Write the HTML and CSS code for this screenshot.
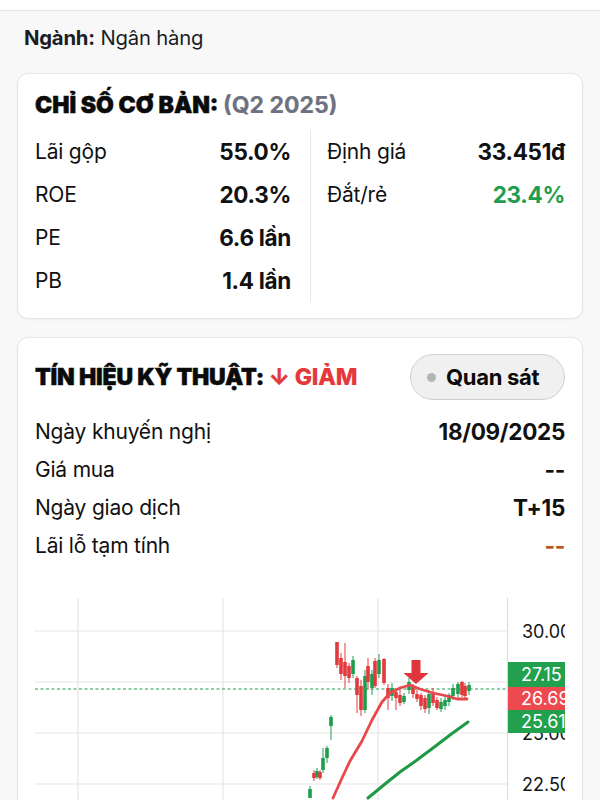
FILE: index.html
```html
<!DOCTYPE html>
<html lang="vi">
<head>
<meta charset="utf-8">
<link rel="stylesheet" href="styles.css">
</head>
<body>
<div class="topbar"></div>
<div class="sector"><b>Ngành:</b> Ngân hàng</div>

<section class="card card-basic">
  <h2 class="title">CHỈ SỐ CƠ BẢN: <span class="muted">(Q2 2025)</span></h2>
  <div class="metrics">
    <div class="col">
      <div class="row"><span>Lãi gộp</span><b>55.0%</b></div>
      <div class="row"><span>ROE</span><b>20.3%</b></div>
      <div class="row"><span>PE</span><b>6.6 lần</b></div>
      <div class="row"><span>PB</span><b>1.4 lần</b></div>
    </div>
    <div class="divider"></div>
    <div class="col">
      <div class="row"><span>Định giá</span><b>33.451đ</b></div>
      <div class="row"><span>Đắt/rẻ</span><b class="green">23.4%</b></div>
    </div>
  </div>
</section>

<section class="card card-tech">
  <div class="tech-head">
    <h2 class="title">TÍN HIỆU KỸ THUẬT: <span class="red">↓ GIẢM</span></h2>
    <button class="pill"><span class="dot"></span>Quan sát</button>
  </div>
  <div class="tech-rows">
    <div class="trow"><span>Ngày khuyến nghị</span><b>18/09/2025</b></div>
    <div class="trow"><span>Giá mua</span><b>--</b></div>
    <div class="trow"><span>Ngày giao dịch</span><b>T+15</b></div>
    <div class="trow"><span>Lãi lỗ tạm tính</span><b class="orange">--</b></div>
  </div>
  <svg class="chart" width="530" height="220" viewBox="0 0 530 220">
    <g transform="translate(-35,-600)">
      <g class="grid">
        <line x1="78" y1="600" x2="78" y2="820"/>
        <line x1="223" y1="600" x2="223" y2="820"/>
        <line x1="378" y1="600" x2="378" y2="820"/>
        <line x1="35" y1="633" x2="507" y2="633"/>
        <line x1="35" y1="684" x2="507" y2="684"/>
        <line x1="35" y1="735" x2="507" y2="735"/>
        <line x1="35" y1="786" x2="507" y2="786"/>
      </g>
      <line class="axis" x1="507.5" y1="600" x2="507.5" y2="820"/>
      <line class="dotted" x1="35" y1="691" x2="507" y2="691"/>

      <polyline class="ma-green" points="368,800 385,786 400,774 417,762 433,750 450,737 468,724"/>

      <g class="candles">
        <line class="gw" x1="310" y1="788" x2="310" y2="800"/><rect class="g" x="308.2" y="791" width="3.6" height="9"/>
        <line class="rw" x1="314" y1="772" x2="314" y2="783"/><rect class="r" x="312.2" y="775" width="3.6" height="5"/>
        <line class="gw" x1="317" y1="770" x2="317" y2="781"/><rect class="g" x="315.2" y="773" width="3.6" height="6"/>
        <line class="rw" x1="320" y1="772" x2="320" y2="782"/><rect class="r" x="318.2" y="774" width="3.6" height="6"/>
        <line class="gw" x1="323" y1="750" x2="323" y2="775"/><rect class="g" x="321.2" y="760" width="3.6" height="12"/>
        <line class="gw" x1="327" y1="748" x2="327" y2="765"/><rect class="g" x="325.2" y="750" width="3.6" height="10"/>
        <line class="gw" x1="331" y1="717" x2="331" y2="742"/><rect class="g" x="329.2" y="719" width="3.6" height="9"/>
        <line class="rw" x1="337" y1="644" x2="337" y2="670"/><rect class="r" x="335.2" y="644" width="3.6" height="23"/>
        <line class="rw" x1="341" y1="655" x2="341" y2="682"/><rect class="r" x="339.2" y="660" width="3.6" height="16"/>
        <line class="rw" x1="345" y1="645" x2="345" y2="690"/><rect class="r" x="343.2" y="664" width="3.6" height="14"/>
        <line class="rw" x1="349" y1="665" x2="349" y2="685"/><rect class="r" x="347.2" y="668" width="3.6" height="12"/>
        <line class="gw" x1="353" y1="658" x2="353" y2="680"/><rect class="g" x="351.2" y="662" width="3.6" height="14"/>
        <line class="rw" x1="357" y1="678" x2="357" y2="715"/><rect class="r" x="355.2" y="680" width="3.6" height="17"/>
        <line class="rw" x1="361" y1="682" x2="361" y2="718"/><rect class="r" x="359.2" y="688" width="3.6" height="24"/>
        <line class="gw" x1="365" y1="672" x2="365" y2="715"/><rect class="g" x="363.2" y="678" width="3.6" height="34"/>
        <line class="rw" x1="368" y1="660" x2="368" y2="692"/><rect class="r" x="366.2" y="668" width="3.6" height="16"/>
        <line class="gw" x1="372" y1="672" x2="372" y2="697"/><rect class="g" x="370.2" y="676" width="3.6" height="14"/>
        <line class="rw" x1="375" y1="660" x2="375" y2="690"/><rect class="r" x="373.2" y="663" width="3.6" height="25"/>
        <line class="gw" x1="379" y1="656" x2="379" y2="680"/><rect class="g" x="377.2" y="662" width="3.6" height="14"/>
        <line class="rw" x1="384" y1="660" x2="384" y2="687"/><rect class="r" x="382.2" y="661" width="3.6" height="24"/>
        <line class="rw" x1="388" y1="686" x2="388" y2="712"/><rect class="r" x="386.2" y="690" width="3.6" height="10"/>
        <line class="gw" x1="392" y1="685" x2="392" y2="703"/><rect class="g" x="390.2" y="690" width="3.6" height="8"/>
        <line class="rw" x1="396" y1="690" x2="396" y2="712"/><rect class="r" x="394.2" y="694" width="3.6" height="6"/>
        <line class="rw" x1="400" y1="692" x2="400" y2="708"/><rect class="r" x="398.2" y="697" width="3.6" height="8"/>
        <line class="gw" x1="404" y1="695" x2="404" y2="706"/><rect class="g" x="402.2" y="698" width="3.6" height="6"/>
        <line class="gw" x1="409" y1="680" x2="409" y2="696"/><rect class="g" x="407.2" y="684" width="3.6" height="8"/>
        <line class="rw" x1="413" y1="686" x2="413" y2="700"/><rect class="r" x="411.2" y="689" width="3.6" height="7"/>
        <line class="rw" x1="417" y1="692" x2="417" y2="704"/><rect class="r" x="415.2" y="696" width="3.6" height="5"/>
        <line class="rw" x1="421" y1="695" x2="421" y2="712"/><rect class="r" x="419.2" y="697" width="3.6" height="11"/>
        <line class="rw" x1="425" y1="697" x2="425" y2="715"/><rect class="r" x="423.2" y="700" width="3.6" height="11"/>
        <line class="gw" x1="429" y1="692" x2="429" y2="716"/><rect class="g" x="427.2" y="696" width="3.6" height="14"/>
        <line class="rw" x1="433" y1="690" x2="433" y2="708"/><rect class="r" x="431.2" y="694" width="3.6" height="11"/>
        <line class="rw" x1="437" y1="699" x2="437" y2="712"/><rect class="r" x="435.2" y="702" width="3.6" height="8"/>
        <line class="gw" x1="441" y1="700" x2="441" y2="714"/><rect class="g" x="439.2" y="704" width="3.6" height="7"/>
        <line class="gw" x1="445" y1="698" x2="445" y2="712"/><rect class="g" x="443.2" y="702" width="3.6" height="6"/>
        <line class="gw" x1="449" y1="695" x2="449" y2="708"/><rect class="g" x="447.2" y="697" width="3.6" height="7"/>
        <line class="gw" x1="453" y1="686" x2="453" y2="702"/><rect class="g" x="451.2" y="690" width="3.6" height="8"/>
        <line class="gw" x1="458" y1="684" x2="458" y2="700"/><rect class="g" x="456.2" y="686" width="3.6" height="10"/>
        <line class="rw" x1="462" y1="683" x2="462" y2="699"/><rect class="r" x="460.2" y="684" width="3.6" height="13"/>
        <line class="rw" x1="465" y1="685" x2="465" y2="700"/><rect class="r" x="463.2" y="688" width="3.6" height="10"/>
        <line class="gw" x1="469" y1="684" x2="469" y2="697"/><rect class="g" x="467.2" y="687" width="3.6" height="6"/>
      </g>

      <polyline class="ma-red" points="333,800 342,780 350,763 362,743 372,722 382,704 390,695 400,690 410,687 420,691 433,695 447,698 457,701 467,701"/>

      <path class="sig" d="M411.5,662 h9 v13 h8 l-12.5,11 l-12.5,-11 h8 z"/>

      <text class="ax" x="522" y="640">30.00</text>
      <text class="ax" x="522" y="742">25.00</text>
      <text class="ax" x="522" y="793">22.50</text>

      <rect class="box-g" x="508" y="664" width="60" height="25"/>
      <text class="bt" x="521" y="683">27.15</text>
      <rect class="box-r" x="508" y="689" width="60" height="23"/>
      <text class="bt" x="521" y="707">26.69</text>
      <rect class="box-g" x="508" y="712" width="60" height="23"/>
      <text class="bt" x="521" y="730">25.61</text>
    </g>
  </svg>
</section>
</body>
</html>
```

FILE: styles.css
```css
* { box-sizing: border-box; }
html, body { margin: 0; padding: 0; }
body {
  width: 600px;
  height: 800px;
  overflow: hidden;
  background: #f8f8f8;
  font-family: Inter, "Noto Sans", "Liberation Sans", sans-serif;
  color: #111;
}
.topbar {
  height: 11px;
  background: #fff;
  border-bottom: 1px solid #e4e4e4;
}
.sector {
  padding: 14px 24px 0;
  height: 62px;
  font-size: 20.3px;
  line-height: 26px;
  color: #1a1d24;
  letter-spacing: -0.2px;
}
.sector b { font-weight: 700; }
.card {
  margin: 0 17px;
  background: #fff;
  border: 1px solid #e6e6e6;
  border-radius: 11px;
  box-shadow: 0 1px 3px rgba(0,0,0,0.04);
}
.card-basic {
  padding: 17px 17px 16px;
  margin-bottom: 18px;
}
.title {
  margin: 0;
  font-size: 23px;
  line-height: 28px;
  font-weight: 900;
  color: #0b0b0b;
  letter-spacing: 0;
  white-space: nowrap;
  -webkit-text-stroke: 0.5px currentColor;
}
.card-tech .title { letter-spacing: -0.2px; }
.muted { color: #6e7280; font-weight: 700; -webkit-text-stroke: 0.2px currentColor; }
.red { color: #e5383b; font-weight: 800; -webkit-text-stroke: 0.2px currentColor; }
.green { color: #1f9d4e; }
.orange { color: #b4561e; }
.metrics {
  display: grid;
  grid-template-columns: 275px 1px 1fr;
  margin-top: 11px;
}
.divider { background: #e8e8e8; }
.col { display: flex; flex-direction: column; }
.col:first-child { padding-right: 19px; }
.col:last-child { padding-left: 16px; }
.row {
  display: flex;
  justify-content: space-between;
  align-items: center;
  height: 43px;
  font-size: 21px;
  letter-spacing: -0.2px;
}
.row b, .trow b { font-weight: 700; font-size: 22.5px; letter-spacing: -0.3px; }
.card-tech {
  padding: 16px 17px 0;
  height: 500px;
  overflow: hidden;
}
.tech-head {
  display: flex;
  justify-content: space-between;
  align-items: center;
  height: 46px;
}
.pill {
  display: flex;
  align-items: center;
  gap: 10px;
  height: 46px;
  width: 155px;
  padding: 0 0 0 16px;
  border: 1.5px solid #cfcfcf;
  border-radius: 23px;
  background: #f0f0f0;
  font-family: inherit;
  font-size: 22px;
  font-weight: 700;
  color: #0b0b0b;
  letter-spacing: -0.3px;
}
.dot {
  width: 9px;
  height: 9px;
  border-radius: 50%;
  background: #b5b5b5;
  flex: none;
}
.tech-rows { margin-top: 12px; }
.trow {
  display: flex;
  justify-content: space-between;
  align-items: center;
  height: 38px;
  font-size: 21px;
  letter-spacing: -0.2px;
}
.chart {
  display: block;
  margin-top: 34px;
  overflow: hidden;
}
.grid line { stroke: #e6e6e6; stroke-width: 1.2; }
.axis { stroke: #dcdcdc; stroke-width: 1.2; }
.dotted { stroke: #1f9d4e; stroke-width: 1.2; stroke-dasharray: 3 2.5; }
.gw { stroke: #1f9d4e; stroke-width: 1; }
.rw { stroke: #e03a3e; stroke-width: 1; }
.g { fill: #1f9d4e; }
.r { fill: #e03a3e; }
.ma-red { fill: none; stroke: #e8474c; stroke-width: 2.8; stroke-linejoin: round; stroke-linecap: round; }
.ma-green { fill: none; stroke: #1f9944; stroke-width: 3; stroke-linecap: round; }
.sig { fill: #e0353a; }
.ax { font-family: Inter, "Liberation Sans", sans-serif; font-size: 18px; fill: #151515; }
.bt { font-family: Inter, "Liberation Sans", sans-serif; font-size: 18px; fill: #fff; }
.box-g { fill: #22a04d; }
.box-r { fill: #ec4a4f; }
```
